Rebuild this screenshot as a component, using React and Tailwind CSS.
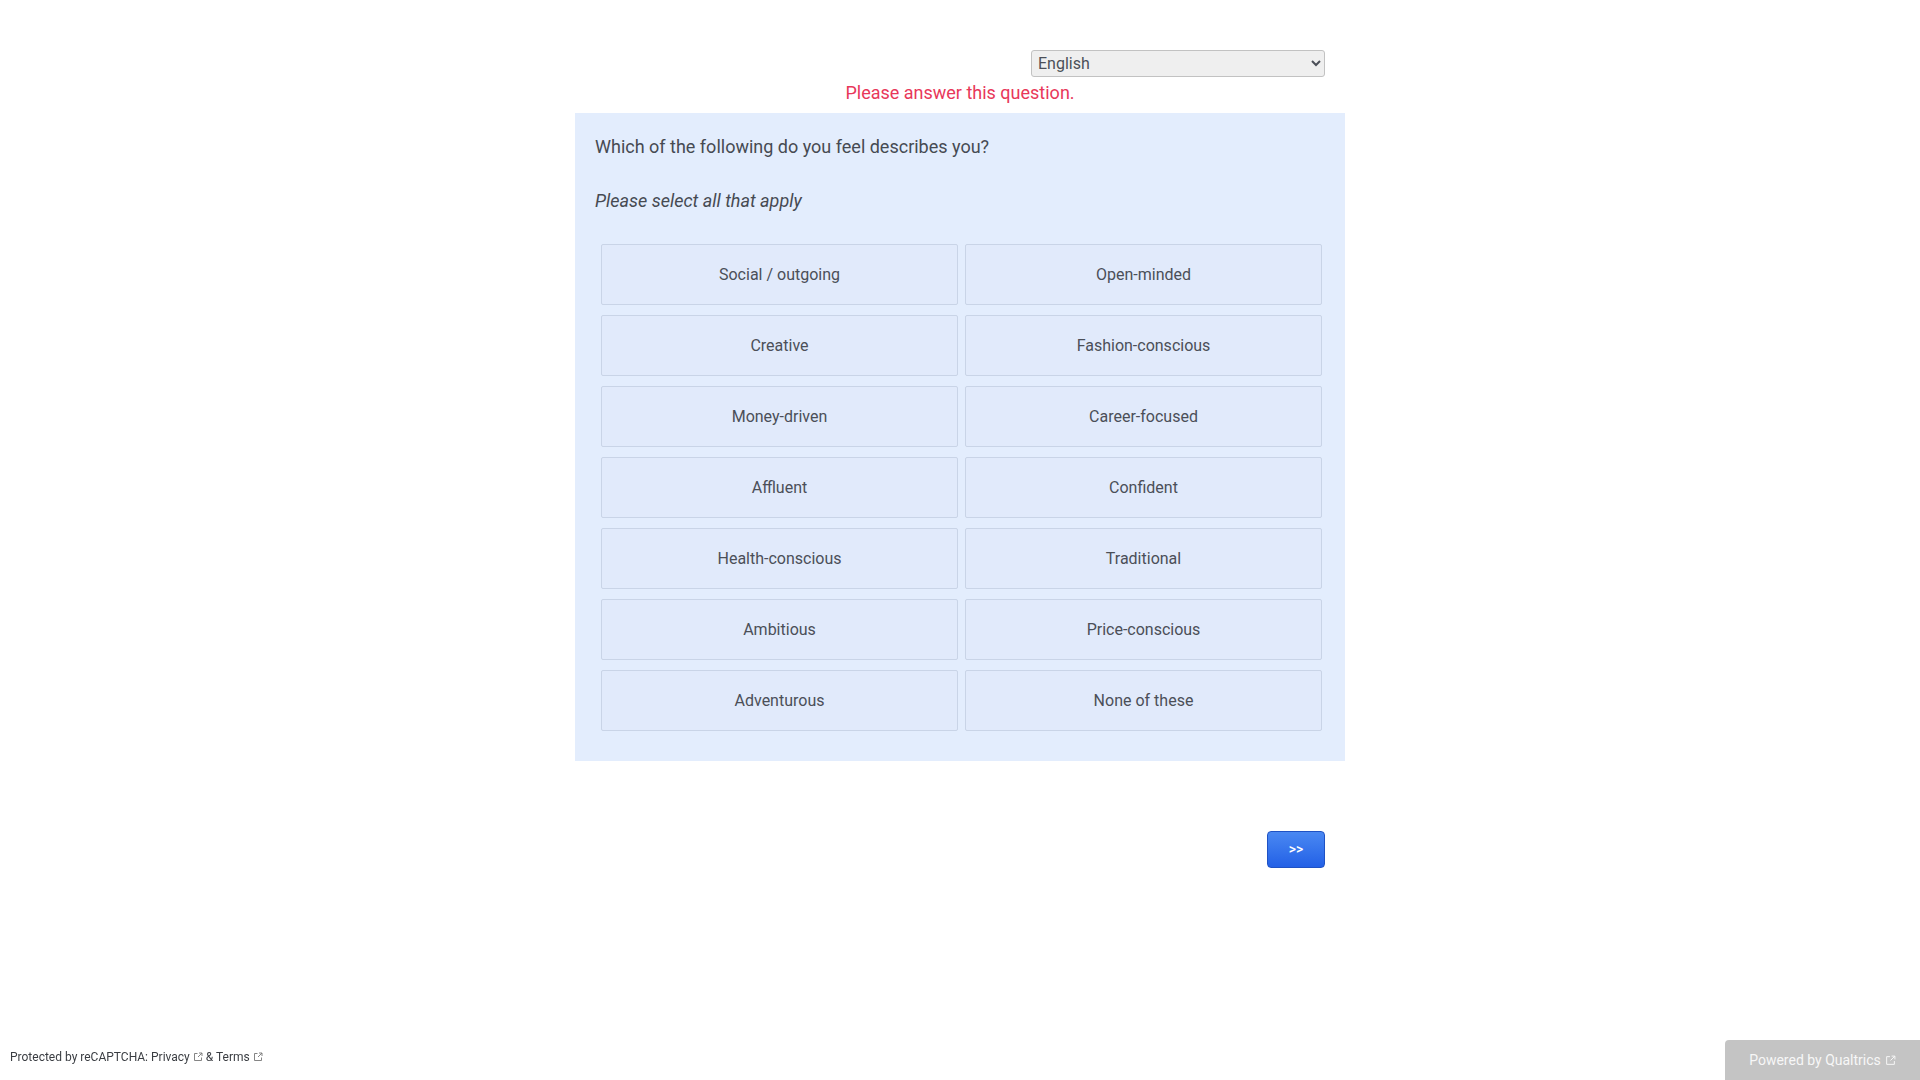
import React from 'react';

const choices = [
    'Social / outgoing', 'Open-minded',
    'Creative', 'Fashion-conscious',
    'Money-driven', 'Career-focused',
    'Affluent', 'Confident',
    'Health-conscious', 'Traditional',
    'Ambitious', 'Price-conscious',
    'Adventurous', 'None of these',
];

function ExtIcon({ className }) {
    return (
        <svg viewBox="0 0 10 10" className={className} fill="none" stroke="currentColor" strokeWidth="0.9">
            <path d="M4.5 1.5H1.5v7h7V5.5" />
            <path d="M6 1h3v3M9 1L5 5" />
        </svg>
    );
}

export default function App() {
    return (
        <div className="min-h-screen bg-white font-['Roboto','Liberation_Sans',sans-serif]">
            <div className="w-[770px] mx-auto pt-[50px]">
                {/* language picker */}
                <div className="flex justify-end pr-[20px]">
                    <select className="w-[294px] h-[27px] bg-[#efefef] border border-[#c2c2c2] rounded-[3px] text-[16px] text-[#4b4f58] pl-[2px]">
                        <option>English</option>
                    </select>
                </div>

                <div className="mt-[5px] text-center text-[18px] leading-[22px] text-[#e8375a]">
                    Please answer this question.
                </div>

                {/* question block */}
                <div className="mt-[9px] bg-[#e3edfd] pl-[20px] pr-[23px] pt-[22px] pb-[30px]">
                    <div className="text-[18px] leading-[24px] text-[#464a52]">
                        Which of the following do you feel describes you?
                    </div>
                    <div className="mt-[30px] text-[18px] leading-[24px] italic text-[#464a52]">
                        Please select all that apply
                    </div>
                    <div className="mt-[31px] ml-[6px] grid grid-cols-2 gap-x-[7px] gap-y-[10px]">
                        {choices.map((c) => (
                            <button
                                key={c}
                                className="h-[61px] w-[357px] bg-[#e1eafb] border border-[#c9d4e7] rounded-[2px] text-[16px] text-[#4b4f58] flex items-center justify-center"
                            >
                                {c}
                            </button>
                        ))}
                    </div>
                </div>

                <div className="flex justify-end pr-[20px] mt-[70px]">
                    <button className="w-[58px] h-[37px] rounded-[4px] border border-[#1f52c4] bg-gradient-to-b from-[#4a88f2] to-[#2360e6] text-white text-[14px] font-medium">
                        &gt;&gt;
                    </button>
                </div>
            </div>

            <div className="fixed left-[10px] bottom-[16px] text-[12px] leading-[14px] text-[#3a3d42] flex items-center gap-[3px]">
                <span>Protected by reCAPTCHA: Privacy</span>
                <ExtIcon className="w-[10px] h-[10px] text-[#777]" />
                <span>&amp; Terms</span>
                <ExtIcon className="w-[10px] h-[10px] text-[#777]" />
            </div>

            <div className="fixed right-0 bottom-0 w-[195px] h-[40px] bg-[#c4c4c4] rounded-tl-[4px] flex items-center justify-center gap-[4px] text-[14px] text-[#f7f7f7]">
                <span>Powered by Qualtrics</span>
                <ExtIcon className="w-[11px] h-[11px]" />
            </div>
        </div>
    );
}
